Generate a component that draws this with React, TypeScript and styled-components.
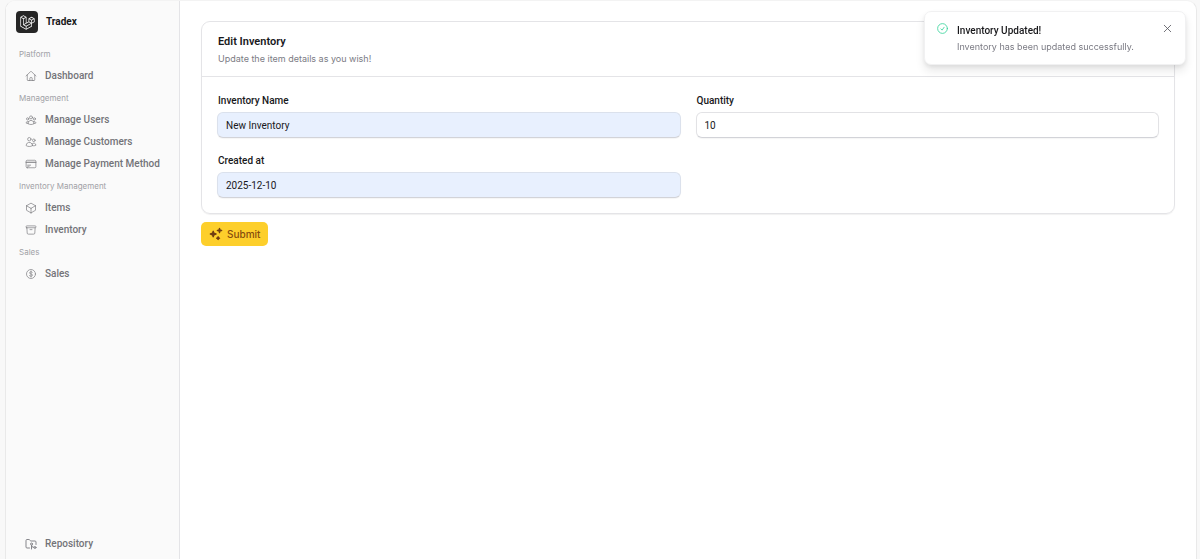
import React from "react";
import styled, { createGlobalStyle } from "styled-components";
import type { IconType } from "react-icons";
import {
  HiOutlineArchiveBox,
  HiOutlineCheckCircle,
  HiOutlineCreditCard,
  HiOutlineCube,
  HiOutlineCurrencyDollar,
  HiOutlineHome,
  HiOutlineUserGroup,
  HiOutlineUsers,
  HiOutlineXMark,
} from "react-icons/hi2";
import { FolderGit2 } from "lucide-react";

const secondaryFont = `Inter, "Liberation Sans", sans-serif`;

const GlobalStyle = createGlobalStyle`
  *, *::before, *::after { box-sizing: border-box; }
  body {
    margin: 0;
    background: #f8f8f8;
    color: #18181b;
    font-family: Roboto, Inter, "Liberation Sans", sans-serif;
    font-size: 10px;
    line-height: 14px;
  }
  h1, h2, p, ul { margin: 0; padding: 0; }
  ul { list-style: none; }
  button, input { font: inherit; color: inherit; }
`;

const Frame = styled.div`
  display: flex;
  min-height: 100vh;
  margin: 0 3px 0 5px;
  border: 1px solid #e9e9e9;
  border-bottom: 0;
  border-top-color: #f3f3f3;
  border-radius: 10px 10px 0 0;
  background: #fff;
  overflow: hidden;
`;

const Sidebar = styled.aside`
  display: flex;
  flex: 0 0 174px;
  flex-direction: column;
  padding: 10px 10px 4px;
  border-right: 1px solid #e4e4e7;
  background: #fafafa;
`;

const Brand = styled.a`
  display: flex;
  align-items: center;
  gap: 8px;
  margin-bottom: 10px;
  color: #18181b;
  font-weight: 700;
  text-decoration: none;
`;

const BrandMark = styled.span`
  display: grid;
  place-items: center;
  width: 22px;
  height: 22px;
  border-radius: 4px;
  background: #262626;
  color: #fff;
`;

const Nav = styled.nav`
  flex: 1;
`;

const GroupLabel = styled.h2`
  padding-left: 3px;
  color: #a1a1a6;
  font-family: ${secondaryFont};
  font-size: 8px;
  font-weight: 400;
  line-height: 22px;
`;

const NavLink = styled.a`
  display: flex;
  align-items: center;
  gap: 8px;
  height: 22px;
  padding-left: 9px;
  color: #737378;
  font-weight: 500;
  text-decoration: none;
  white-space: nowrap;

  svg {
    flex: none;
    color: #85858a;
  }
`;

const Main = styled.main`
  flex: 1;
  min-width: 0;
  padding: 20px 21px;
`;

const Card = styled.section`
  border: 1px solid #e4e4e7;
  border-radius: 9px;
  box-shadow: 0 1px 1px rgba(0, 0, 0, 0.06);
`;

const CardHeader = styled.header`
  padding: 12px 16px 8px;
  border-bottom: 1px solid #e4e4e7;
`;

const CardTitle = styled.h1`
  font-size: 11px;
  font-weight: 600;
  line-height: 16px;
`;

const CardText = styled.p`
  color: #7b7b84;
  font-family: ${secondaryFont};
  font-size: 9px;
  line-height: 18px;
`;

const Fields = styled.div`
  display: grid;
  grid-template-columns: 1fr 1fr;
  gap: 16px 15px;
  padding: 17px 15px 15px;
`;

const Field = styled.div`
  display: flex;
  flex-direction: column;
  gap: 4px;
`;

const Label = styled.label`
  padding-left: 1px;
  font-weight: 500;
`;

const TextInput = styled.input<{ $filled?: boolean }>`
  width: 100%;
  height: 26px;
  padding: 0 8px;
  border: 1px solid ${(p) => (p.$filled ? "#dbe1ec" : "#e2e2e5")};
  border-bottom-color: #d2d3d8;
  border-radius: 6px;
  outline: 0;
  background: ${(p) => (p.$filled ? "#e8f0fe" : "#fff")};
  box-shadow: 0 1px 1px rgba(0, 0, 0, 0.04);
`;

const SubmitButton = styled.button`
  display: flex;
  align-items: center;
  gap: 4px;
  height: 24px;
  margin-top: 8px;
  padding: 0 8px;
  border: 0;
  border-radius: 5px;
  background: #fdcf2b;
  color: #854d0e;
  font-family: ${secondaryFont};
  font-weight: 500;

  svg {
    color: #713f12;
  }
`;

const Toast = styled.div`
  position: fixed;
  top: 11px;
  right: 14px;
  display: flex;
  align-items: flex-start;
  width: 262px;
  padding: 10px 11px 9px;
  border: 1px solid #f1f1f2;
  border-radius: 7px;
  background: #fff;
  box-shadow: 0 6px 10px rgba(0, 0, 0, 0.09), 0 2px 4px rgba(0, 0, 0, 0.07);
`;

const ToastBody = styled.div`
  flex: 1;
  padding: 1px 0 0 8px;
  line-height: 16px;
  white-space: nowrap;
`;

const ToastTitle = styled.p`
  font-weight: 500;
`;

const ToastText = styled.p`
  color: #7b7b84;
  font-family: ${secondaryFont};
  font-size: 9px;
`;

const CloseButton = styled.button`
  display: grid;
  padding: 0;
  border: 0;
  background: none;
  color: #52525b;
`;

interface NavItem {
  label: string;
  icon: IconType;
}

const groups: { title: string; items: NavItem[] }[] = [
  { title: "Platform", items: [{ label: "Dashboard", icon: HiOutlineHome }] },
  {
    title: "Management",
    items: [
      { label: "Manage Users", icon: HiOutlineUserGroup },
      { label: "Manage Customers", icon: HiOutlineUsers },
      { label: "Manage Payment Method", icon: HiOutlineCreditCard },
    ],
  },
  {
    title: "Inventory Management",
    items: [
      { label: "Items", icon: HiOutlineCube },
      { label: "Inventory", icon: HiOutlineArchiveBox },
    ],
  },
  { title: "Sales", items: [{ label: "Sales", icon: HiOutlineCurrencyDollar }] },
];

const fields = [
  { id: "name", label: "Inventory Name", value: "New Inventory", filled: true },
  { id: "quantity", label: "Quantity", value: "10", filled: false },
  { id: "created", label: "Created at", value: "2025-12-10", filled: true },
];

function Logo() {
  return (
    <svg width="15" height="15" viewBox="0 0 40 42" fill="currentColor" aria-hidden="true">
      <path
        fillRule="evenodd"
        clipRule="evenodd"
        d="M17.2 5.63325L8.6 0.855469L0 5.63325V32.1434L16.2 41.1434L32.4 32.1434V23.699L40 19.4767V9.85547L31.4 5.07769L22.8 9.85547V18.2999L17.2 21.411V5.63325ZM38 18.2999L32.4 21.411V15.2545L38 12.1434V18.2999ZM36.9409 10.4439L31.4 13.5221L25.8591 10.4439L31.4 7.36561L36.9409 10.4439ZM24.8 18.2999V12.1434L30.4 15.2545V21.411L24.8 18.2999ZM23.8 20.0323L29.3409 23.1105L16.2 30.411L10.6591 27.3328L23.8 20.0323ZM7.6 27.9212L15.2 32.1434V38.2999L2 30.9666V7.92116L7.6 11.0323V27.9212ZM8.6 9.29991L3.05913 6.22165L8.6 3.14339L14.1409 6.22165L8.6 9.29991ZM30.4 24.8101L17.2 32.1434V38.2999L30.4 30.9666V24.8101ZM9.6 11.0323L15.2 7.92116V22.5221L9.6 25.6333V11.0323Z"
      />
    </svg>
  );
}

function Sparkles() {
  return (
    <svg width="14" height="14" viewBox="0 0 20 20" fill="currentColor" aria-hidden="true">
      <path d="M15.98 1.804a1 1 0 0 0-1.96 0l-.24 1.192a1 1 0 0 1-.784.785l-1.192.238a1 1 0 0 0 0 1.962l1.192.238a1 1 0 0 1 .785.785l.238 1.192a1 1 0 0 0 1.962 0l.238-1.192a1 1 0 0 1 .785-.785l1.192-.238a1 1 0 0 0 0-1.962l-1.192-.238a1 1 0 0 1-.785-.785l-.238-1.192ZM6.949 5.684a1 1 0 0 0-1.898 0l-.683 2.051a1 1 0 0 1-.633.633l-2.051.683a1 1 0 0 0 0 1.898l2.051.684a1 1 0 0 1 .633.632l.683 2.051a1 1 0 0 0 1.898 0l.683-2.051a1 1 0 0 1 .633-.633l2.051-.683a1 1 0 0 0 0-1.898l-2.051-.683a1 1 0 0 1-.633-.633L6.95 5.684ZM13.949 13.684a1 1 0 0 0-1.898 0l-.184.551a1 1 0 0 1-.632.633l-.551.183a1 1 0 0 0 0 1.898l.551.183a1 1 0 0 1 .633.633l.183.551a1 1 0 0 0 1.898 0l.184-.551a1 1 0 0 1 .632-.633l.551-.183a1 1 0 0 0 0-1.898l-.551-.184a1 1 0 0 1-.633-.632l-.183-.551Z" />
    </svg>
  );
}

export default function App() {
  return (
    <>
      <GlobalStyle />
      <Frame>
        <Sidebar>
          <Brand href="#">
            <BrandMark>
              <Logo />
            </BrandMark>
            Tradex
          </Brand>
          <Nav>
            {groups.map((group) => (
              <section key={group.title}>
                <GroupLabel>{group.title}</GroupLabel>
                <ul>
                  {group.items.map(({ label, icon: Icon }) => (
                    <li key={label}>
                      <NavLink href="#">
                        <Icon size={12} />
                        {label}
                      </NavLink>
                    </li>
                  ))}
                </ul>
              </section>
            ))}
          </Nav>
          <NavLink href="#">
            <FolderGit2 size={12} strokeWidth={2} />
            Repository
          </NavLink>
        </Sidebar>
        <Main>
          <form onSubmit={(e) => e.preventDefault()}>
            <Card>
              <CardHeader>
                <CardTitle>Edit Inventory</CardTitle>
                <CardText>Update the item details as you wish!</CardText>
              </CardHeader>
              <Fields>
                {fields.map((f) => (
                  <Field key={f.id}>
                    <Label htmlFor={f.id}>{f.label}</Label>
                    <TextInput id={f.id} type="text" defaultValue={f.value} $filled={f.filled} />
                  </Field>
                ))}
              </Fields>
            </Card>
            <SubmitButton type="submit">
              <Sparkles />
              Submit
            </SubmitButton>
          </form>
        </Main>
      </Frame>
      <Toast role="status">
        <HiOutlineCheckCircle size={13} color="#34d399" />
        <ToastBody>
          <ToastTitle>Inventory Updated!</ToastTitle>
          <ToastText>Inventory has been updated successfully.</ToastText>
        </ToastBody>
        <CloseButton type="button" aria-label="Close">
          <HiOutlineXMark size={13} />
        </CloseButton>
      </Toast>
    </>
  );
}
